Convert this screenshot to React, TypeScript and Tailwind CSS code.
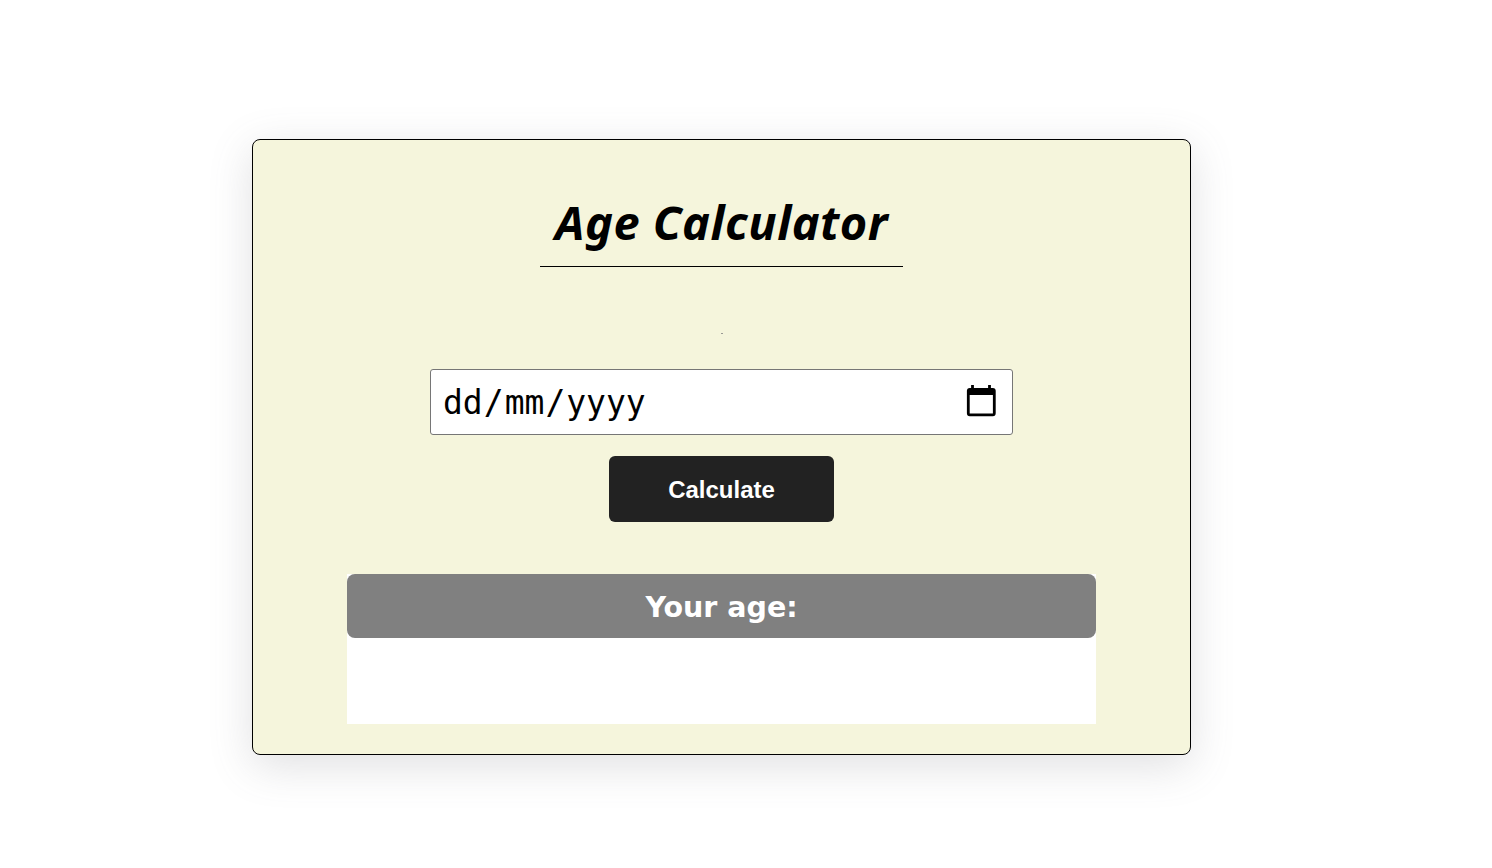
export default function App() {
  return (
    <main className="flex h-[868px] w-full items-start overflow-hidden bg-white pt-[139px] pl-[252px] text-black">
      <section className="flex h-[616px] w-[939px] flex-col items-center rounded-[8px] border border-black bg-[#f5f5dc] shadow-[0_10.5px_43.5px_rgba(100,100,111,0.2)]">
        <h1 className="mt-[46px] flex h-[81px] w-[363px] justify-center border-b border-black pt-[3px] font-['Noto_Sans',sans-serif] text-[47px] leading-[66px] font-bold whitespace-nowrap italic tracking-[0.5px]">
          Age Calculator
        </h1>
        <div className="mt-[66px] h-px w-[2px] bg-[#999994]" />
        <div className="mt-[35px] flex h-[66px] w-[583px] items-center justify-between rounded-[3px] border border-[#767676] bg-white pr-[9px] pl-[11px]">
          <div className="flex pt-[2px] font-['DejaVu_Sans_Mono',monospace] text-[33px] leading-[40px]">
            <span className="px-px">dd</span>
            <span>/</span>
            <span className="px-px">mm</span>
            <span>/</span>
            <span className="px-px">yyyy</span>
          </div>
          <svg className="mb-[4px] h-[36px] w-[40px]" viewBox="0 0 40 36" fill="none">
            <path d="M9.5 3V8M26.5 3V8" stroke="#000" strokeWidth="2.8" />
            <rect x="5.3" y="7.3" width="26" height="25.5" rx="1.5" stroke="#000" strokeWidth="2.8" />
            <path d="M5 7H31V13H5Z" fill="#000" />
          </svg>
        </div>
        <button className="mt-[21px] h-[66px] w-[225px] rounded-[6px] bg-[#222] pt-px font-['Liberation_Sans',Arial,sans-serif] text-[24px] font-bold text-white">
          Calculate
        </button>
        <div className="mt-[52px] h-[150px] w-[749px] bg-white">
          <div className="flex h-[64px] items-center justify-center rounded-[8px] bg-[#808080] pt-[4px] font-['DejaVu_Sans',Verdana,sans-serif] text-[28.5px] font-bold text-white">
            Your age:
          </div>
        </div>
      </section>
    </main>
  );
}
